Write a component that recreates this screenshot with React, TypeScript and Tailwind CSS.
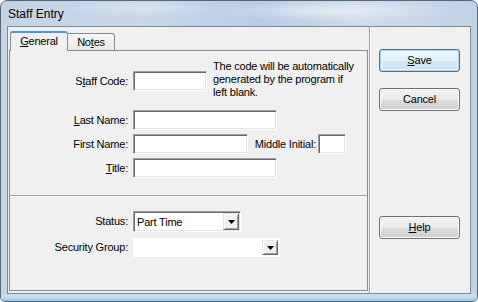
import React from 'react';

function U({ children }: { children: React.ReactNode }) {
  return <span className="underline underline-offset-[1px] decoration-[1px]">{children}</span>;
}

function Field({ width, height = 20 }: { width: number; height?: number }) {
  return (
    <div
      className="bg-white border border-t-[#a0a0a0] border-l-[#a0a0a0] border-r-white border-b-white shadow-[inset_1px_1px_0_#696969,inset_-1px_-1px_0_#e3e3e3]"
      style={{ width, height }}
    />
  );
}

function Arrow({ h }: { h: number }) {
  return (
    <div
      className="w-[16px] flex items-center justify-center bg-[#f0f0f0] border border-t-[#e3e3e3] border-l-[#e3e3e3] border-r-[#696969] border-b-[#696969] shadow-[inset_1px_1px_0_#ffffff,inset_-1px_-1px_0_#a0a0a0]"
      style={{ height: h }}
    >
      <svg width="7" height="4" viewBox="0 0 7 4">
        <polygon points="0,0 7,0 3.5,4" fill="#000" />
      </svg>
    </div>
  );
}

function Row({ label, children }: { label: React.ReactNode; children: React.ReactNode }) {
  return (
    <div className="flex items-center">
      <div className="w-[123px] pr-[5px] text-right whitespace-nowrap">{label}</div>
      {children}
    </div>
  );
}

function Btn({ children, primary }: { children: React.ReactNode; primary?: boolean }) {
  return (
    <div
      className={
        primary
          ? 'w-[81px] h-[23px] flex items-center justify-center rounded-[3px] border border-[#5e6b78] bg-[linear-gradient(180deg,#edf6fc_0%,#e2f0fa_50%,#d3e8f7_51%,#cbe3f5_100%)] shadow-[inset_0_0_0_1px_#a9d9f5,inset_0_0_0_2px_#e4f4fc]'
          : 'w-[81px] h-[23px] flex items-center justify-center rounded-[3px] border border-[#707070] bg-[linear-gradient(180deg,#f2f2f2_0%,#ebebeb_50%,#dddddd_51%,#cfcfcf_100%)] shadow-[inset_0_0_0_1px_#fcfcfc]'
      }
    >
      {children}
    </div>
  );
}

export default function App() {
  return (
    <div className="w-[478px] h-[302px] bg-white font-['Liberation_Sans',Arial,sans-serif] text-[11px] tracking-[-0.2px] text-black">
      <div className="w-[478px] h-[302px] flex flex-col rounded-t-[7px] rounded-b-[5px] border border-[#56657a] overflow-hidden bg-[linear-gradient(90deg,#c3d4e7_0%,#c8d8ea_30%,#b8cce2_55%,#cfdcec_75%,#c0d2e6_100%)]">
        {/* title bar */}
        <div className="h-[25px] flex items-center pl-[7px] pt-[1px] text-[12px] tracking-normal text-black bg-[radial-gradient(ellipse_120px_10px_at_70%_40%,rgba(255,255,255,0.5),transparent),radial-gradient(ellipse_80px_8px_at_30%_30%,rgba(255,255,255,0.3),transparent)]">
          Staff Entry
        </div>

        <div className="flex-1 flex px-[6px]">
          {/* client area */}
          <div className="flex-1 flex bg-[#f0f0f0] border border-[#7d8a99]">
            {/* left: tab control */}
            <div className="w-[361px] flex flex-col pt-[4px] pl-[1px] pr-[1px] pb-[2px]">
              <div className="flex items-end h-[19px] pl-[1px]">
                <div className="relative z-10 -mb-px w-[58px] h-[20px] flex items-center justify-center pb-[1px] bg-[#f0f0f0] border border-b-0 border-[#898c95] border-t-2 border-t-[#4a98dc] rounded-t-[3px]">
                  <span><U>G</U>eneral</span>
                </div>
                <div className="w-[47px] h-[17px] flex items-center justify-center bg-[linear-gradient(180deg,#f7f7f7,#e9e9e9)] border border-l-0 border-b-0 border-[#898c95] rounded-tr-[3px]">
                  <span>No<U>t</U>es</span>
                </div>
              </div>
              <div className="flex-1 flex flex-col border border-[#898c95] bg-[#f0f0f0]">
                {/* upper section */}
                <div className="h-[145px] border-b border-b-[#a0a0a0]">
                  <div className="flex items-start mt-[9px]">
                    <div className="mt-[11px]">
                      <Row label={<>S<U>t</U>aff Code:</>}>
                        <Field width={74} />
                      </Row>
                    </div>
                    <div className="ml-[6px] w-[150px] leading-[13px] whitespace-nowrap">
                      The code will be automatically
                      <br />
                      generated by the program if
                      <br />
                      left blank.
                    </div>
                  </div>
                  <div className="mt-[11px] flex flex-col gap-[4px]">
                    <Row label={<><U>L</U>ast Name:</>}>
                      <Field width={144} />
                    </Row>
                    <Row label="First Name:">
                      <Field width={115} />
                      <div className="w-[70px] pr-[2px] text-right whitespace-nowrap">Middle Initial:</div>
                      <Field width={28} />
                    </Row>
                    <Row label={<><U>T</U>itle:</>}>
                      <Field width={144} />
                    </Row>
                  </div>
                </div>
                {/* lower section */}
                <div className="flex-1 border-t border-t-white">
                  <div className="mt-[14px]">
                    <Row label="Status:">
                      <div className="w-[108px] h-[21px] flex items-center justify-between bg-white border border-t-[#a0a0a0] border-l-[#a0a0a0] border-r-white border-b-white shadow-[inset_1px_1px_0_#696969,inset_-1px_-1px_0_#e3e3e3] pl-[3px] pr-[1px]">
                        <span className="pt-[1px]">Part Time</span>
                        <Arrow h={17} />
                      </div>
                    </Row>
                  </div>
                  <div className="mt-[6px]">
                    <Row label="Security Group:">
                      <div className="w-[147px] h-[19px] flex items-center justify-end bg-white p-[2px]">
                        <Arrow h={15} />
                      </div>
                    </Row>
                  </div>
                </div>
              </div>
            </div>

            {/* separator */}
            <div className="w-[2px] border-l border-l-[#a0a0a0] border-r border-r-white" />

            {/* right: buttons */}
            <div className="flex-1 flex flex-col pl-[8px]">
              <div className="mt-[22px]">
                <Btn primary>
                  <span><U>S</U>ave</span>
                </Btn>
              </div>
              <div className="mt-[16px]">
                <Btn>Cancel</Btn>
              </div>
              <div className="mt-[105px]">
                <Btn>
                  <span><U>H</U>elp</span>
                </Btn>
              </div>
            </div>
          </div>
        </div>

        {/* bottom frame */}
        <div className="h-[7px] bg-[linear-gradient(180deg,#cfdeee_0%,#bfd9ee_60%,#7fcbee_100%)]" />
      </div>
    </div>
  );
}
